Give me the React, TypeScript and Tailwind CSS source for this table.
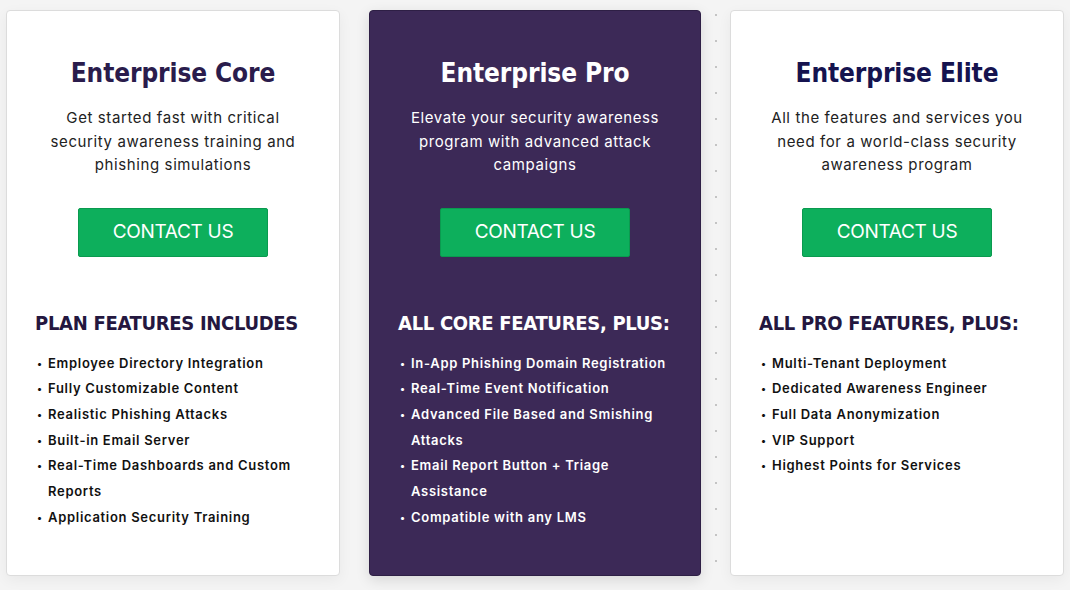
import React from "react";

type Plan = {
  title: string;
  desc: string;
  heading: string;
  items: string[];
  dark?: boolean;
  titleColor: string;
};

const plans: Plan[] = [
  {
    title: "Enterprise Core",
    desc: "Get started fast with critical security awareness training and phishing simulations",
    heading: "PLAN FEATURES INCLUDES",
    items: [
      "Employee Directory Integration",
      "Fully Customizable Content",
      "Realistic Phishing Attacks",
      "Built-in Email Server",
      "Real-Time Dashboards and Custom Reports",
      "Application Security Training",
    ],
    titleColor: "text-[#2a1c4c]",
  },
  {
    title: "Enterprise Pro",
    desc: "Elevate your security awareness program with advanced attack campaigns",
    heading: "ALL CORE FEATURES, PLUS:",
    items: [
      "In-App Phishing Domain Registration",
      "Real-Time Event Notification",
      "Advanced File Based and Smishing Attacks",
      "Email Report Button + Triage Assistance",
      "Compatible with any LMS",
    ],
    dark: true,
    titleColor: "text-white",
  },
  {
    title: "Enterprise Elite",
    desc: "All the features and services you need for a world-class security awareness program",
    heading: "ALL PRO FEATURES, PLUS:",
    items: [
      "Multi-Tenant Deployment",
      "Dedicated Awareness Engineer",
      "Full Data Anonymization",
      "VIP Support",
      "Highest Points for Services",
    ],
    titleColor: "text-[#15134f]",
  },
];

function Card({ p, w }: { p: Plan; w: string }) {
  const dark = !!p.dark;
  return (
    <div
      className={`${w} shrink-0 flex flex-col rounded-[4px] px-[28px] pt-[46px] ${
        dark
          ? "bg-[#3c2957] border border-[#2e1f45] shadow-[0_4px_14px_rgba(0,0,0,0.12)]"
          : "bg-white border border-[#dcdcdc] shadow-[0_4px_14px_rgba(0,0,0,0.05)]"
      }`}
    >
      <h2
        className={`text-center text-[26px] leading-[32px] font-bold tracking-[-0.1px] whitespace-nowrap ${p.titleColor}`}
        style={{ fontFamily: '"DejaVu Sans Condensed", "DejaVu Sans", sans-serif' }}
      >
        {p.title}
      </h2>
      <p
        className={`mt-[17px] text-center text-[15px] leading-[23.5px] tracking-[0.6px] px-[8px] ${
          dark ? "text-white" : "text-[#222]"
        }`}
        style={{ fontFamily: 'Inter, "Noto Sans", sans-serif' }}
      >
        {p.desc}
      </p>
      <div className="flex justify-center mt-[31px]">
        <button
          className="w-[190px] h-[49px] rounded-[2px] bg-[#0daf5c] border border-[#0a9a4f] text-white text-[19px] tracking-[-0.3px]"
          style={{ fontFamily: 'Inter, "Noto Sans", sans-serif' }}
        >
          CONTACT US
        </button>
      </div>
      <h3
        className={`mt-[53px] text-[20px] leading-[26px] font-bold tracking-[-0.3px] whitespace-nowrap ${
          dark ? "text-white" : "text-[#24173f]"
        }`}
        style={{ fontFamily: '"DejaVu Sans Condensed", "DejaVu Sans", sans-serif' }}
      >
        {p.heading}
      </h3>
      <ul
        className={`mt-[15px] flex flex-col text-[13px] leading-[25.7px] font-semibold tracking-[0.7px] ${
          dark ? "text-white" : "text-[#111]"
        }`}
        style={{ fontFamily: 'Inter, "Noto Sans", sans-serif' }}
      >
        {p.items.map((it) => (
          <li key={it} className="flex pl-[2px]">
            <span className="w-[11px] shrink-0 text-[10px]">•</span>
            <span>{it}</span>
          </li>
        ))}
      </ul>
    </div>
  );
}

export default function App() {
  return (
    <div className="w-[1070px] h-[590px] bg-[#f4f4f4] overflow-hidden">
      <div className="flex pt-[10px] pl-[6px] h-[576px]">
        <Card p={plans[0]} w="w-[334px]" />
        <div className="w-[29px] shrink-0" />
        <Card p={plans[1]} w="w-[332px]" />
        <div className="w-[29px] shrink-0 flex justify-center">
          <div className="w-[2px] h-full pt-[4px] flex flex-col gap-[24px]">
            {Array.from({ length: 22 }).map((_, i) => (
              <div key={i} className="w-[2px] h-[2px] rounded-full bg-[#b5b5b5]" />
            ))}
          </div>
        </div>
        <Card p={plans[2]} w="w-[334px]" />
      </div>
    </div>
  );
}
